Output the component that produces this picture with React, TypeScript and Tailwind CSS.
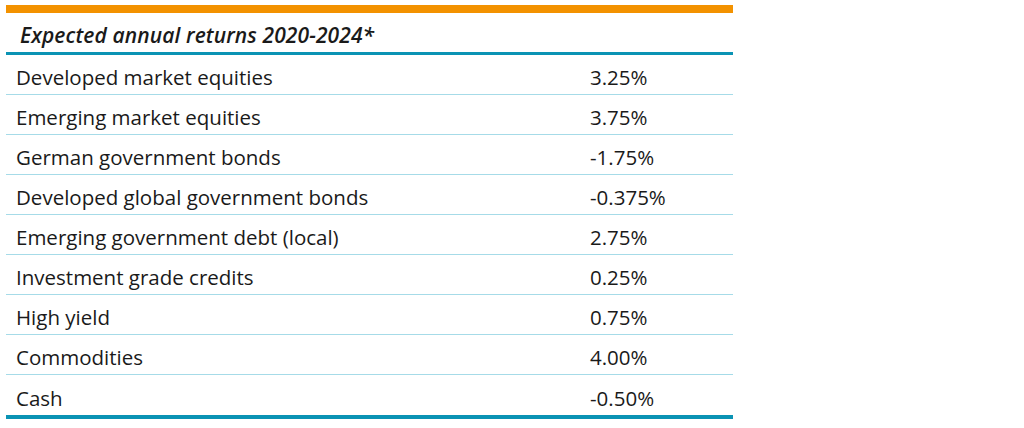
const rows: [string, string][] = [
  ['Developed market equities', '3.25%'],
  ['Emerging market equities', '3.75%'],
  ['German government bonds', '-1.75%'],
  ['Developed global government bonds', '-0.375%'],
  ['Emerging government debt (local)', '2.75%'],
  ['Investment grade credits', '0.25%'],
  ['High yield', '0.75%'],
  ['Commodities', '4.00%'],
  ['Cash', '-0.50%'],
];

export default function App() {
  return (
    <div className="w-[1024px] h-[428px] bg-white pt-[5px] pl-[6px] font-['Open_Sans',sans-serif] text-[#1a1a1a]">
      <div className="w-[727px]">
        <div className="h-[8px] bg-[#f39200]" />
        <div className="h-[42px] border-b-[3px] border-[#0a93b4] flex items-center pl-[14px] pt-[7px]">
          <span className="italic font-semibold text-[21px] tracking-[0.1px]">
            Expected annual returns 2020-2024*
          </span>
        </div>
        {rows.map(([label, value], i) => (
          <div
            key={label}
            className={`flex items-center pt-[6px] text-[20.5px] ${
              i === rows.length - 1
                ? 'h-[44px] border-b-[4px] border-[#0a93b4]'
                : 'h-[40px] border-b border-[#a6dbe8]'
            }`}
          >
            <span className="w-[584px] pl-[10px]">{label}</span>
            <span>{value}</span>
          </div>
        ))}
      </div>
    </div>
  );
}
